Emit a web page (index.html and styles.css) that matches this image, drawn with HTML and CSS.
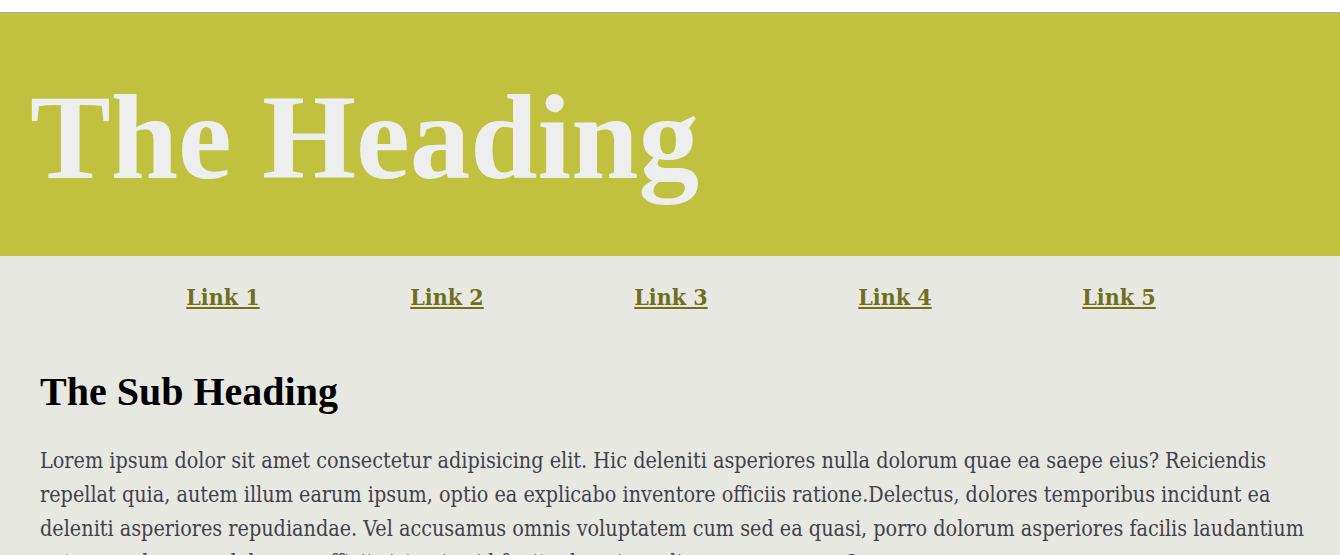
FILE: index.html
```html
<!DOCTYPE html>
<html lang="en">
<head>
<meta charset="utf-8">
<title>The Heading</title>
<link rel="stylesheet" href="styles.css">
</head>
<body>
<div class="topbar"></div>
<header class="hero">
  <h1 class="hero-title">The Heading</h1>
</header>
<nav class="nav">
  <a class="nav-link" href="#">Link 1</a>
  <a class="nav-link" href="#">Link 2</a>
  <a class="nav-link" href="#">Link 3</a>
  <a class="nav-link" href="#">Link 4</a>
  <a class="nav-link" href="#">Link 5</a>
</nav>
<main class="content">
  <h2 class="sub-title">The Sub Heading</h2>
  <p class="text">Lorem ipsum dolor sit amet consectetur adipisicing elit. Hic deleniti asperiores nulla dolorum quae ea saepe eius? Reiciendis repellat quia, autem illum earum ipsum, optio ea explicabo inventore officiis ratione.Delectus, dolores temporibus incidunt ea deleniti asperiores repudiandae. Vel accusamus omnis voluptatem cum sed ea quasi, porro dolorum asperiores facilis laudantium natus quod a quos dolorum, officiis iste eius id fugit ad veniam aliquam, numquam?</p>
</main>
</body>
</html>
```
FILE: styles.css
```css
html, body {
  margin: 0;
  padding: 0;
}
body {
  background: #e7e8e2;
  font-family: "DejaVu Serif Condensed", "DejaVu Serif", serif;
  font-stretch: condensed;
}
.topbar {
  height: 12px;
  background: #ffffff;
  border-bottom: 1px solid #aaaaaa;
}
.hero {
  background: #c0c13f;
  height: 243px;
  box-sizing: border-box;
  padding: 64px 0 0 30px;
}
.hero-title {
  margin: 0;
  font-family: "Liberation Serif", "Times New Roman", serif;
  font-weight: bold;
  font-size: 121px;
  line-height: 1;
  color: #eeeeee;
}
.nav {
  display: grid;
  grid-template-columns: repeat(5, 1fr);
  justify-items: center;
  padding: 26px 109px 0 111px;
  height: 60px;
}
.nav-link {
  font-size: 23px;
  font-weight: bold;
  color: #6f6f1e;
  text-decoration: underline;
  line-height: 30px;
}
.content {
  padding: 0 25px 0 40px;
}
.sub-title {
  margin: 27px 0 0;
  font-family: "Liberation Serif", "Times New Roman", serif;
  font-weight: bold;
  font-size: 40px;
  line-height: 46px;
  color: #000000;
}
.text {
  margin: 29px 0 0;
  font-size: 21.4px;
  line-height: 34px;
  color: #42424a;
}
```
